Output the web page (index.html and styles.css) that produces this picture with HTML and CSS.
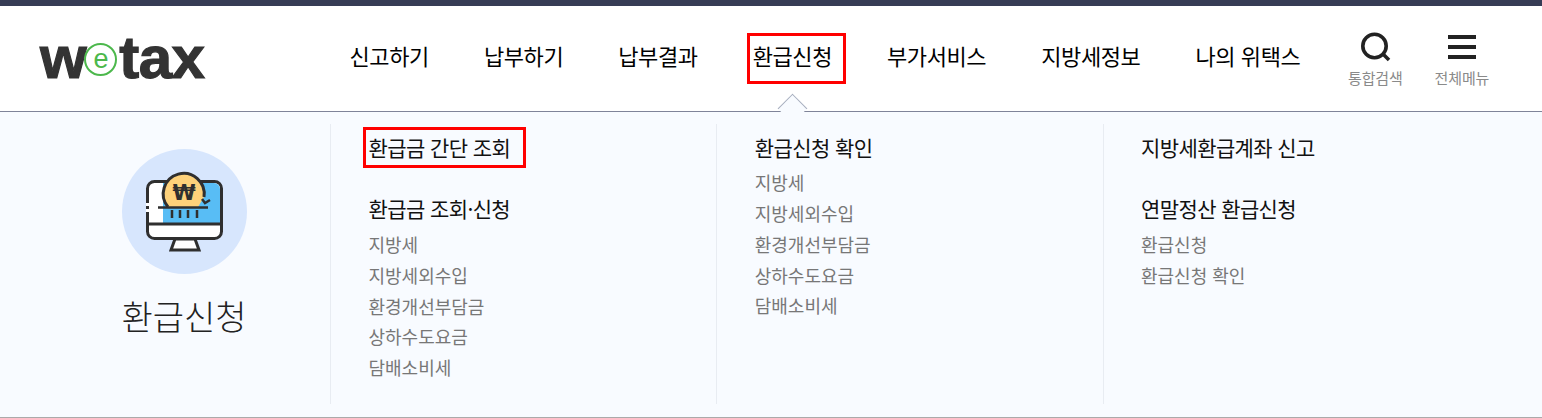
FILE: index.html
```html
<!DOCTYPE html>
<html lang="ko">

<head>
  <meta charset="UTF-8">
  <title>wetax</title>
  <link rel="stylesheet" href="styles.css">
</head>

<body>
  <header class="header">
    <div class="logo">w<span class="logo-e">e</span>tax</div>
    <nav class="gnb">
      <a>신고하기</a>
      <a>납부하기</a>
      <a>납부결과</a>
      <a class="current">환급신청</a>
      <a>부가서비스</a>
      <a>지방세정보</a>
      <a>나의 위택스</a>
    </nav>
    <div class="tools">
      <div class="tool">
        <svg width="32" height="30" viewBox="0 0 32 30"><circle cx="15.500" cy="14" r="11.700" fill="none" stroke="#222" stroke-width="3.600"/><path d="M24 22l6 6" stroke="#222" stroke-width="3.600"/></svg>
        <span>통합검색</span>
      </div>
      <div class="tool">
        <svg width="32" height="30" viewBox="0 0 32 30"><path d="M2 5h28M2 15h28M2 25h28" stroke="#222" stroke-width="4"/></svg>
        <span>전체메뉴</span>
      </div>
    </div>
  </header>
  <section class="panel">
    <div class="intro">
      <div class="intro-icon">
        <svg width="125" height="125" viewBox="0 0 125 125">
          <path d="M53 90h20l4 11H49z" fill="#fff" stroke="#2f2f2f" stroke-width="3"/>
          <rect x="25.500" y="32.500" width="74" height="57" rx="7" fill="#fff" stroke="#2f2f2f" stroke-width="3"/>
          <path d="M41 34h51a6 6 0 0 1 6 6v35H41z" fill="#58bdf5"/>
          <path d="M25 75h75" stroke="#2f2f2f" stroke-width="3"/>
          <path d="M46 58A20.500 20.500 0 1 1 82 48L76 58z" fill="#fdd17a"/>
          <path d="M46 58A20.500 20.500 0 1 1 82 48" fill="none" stroke="#2f2f2f" stroke-width="3"/>
          <path d="M80 50l3 4 5-3" fill="none" stroke="#2f2f2f" stroke-width="2.500"/>
          <path d="M24 54h3v3h-3zM24 60h3v3h-3z" fill="#fff"/>
          <text x="62" y="51" class="won">₩</text>
          <path d="M36 58.500h50M50 61v8M58 61v8M66 61v8M75 61v8" stroke="#2f2f2f" stroke-width="2.500"/>
        </svg>
      </div>
      <h2>환급신청</h2>
    </div>
    <div class="col">
      <a class="title marked">환급금 간단 조회</a>
      <a class="title">환급금 조회·신청</a>
      <a>지방세</a>
      <a>지방세외수입</a>
      <a>환경개선부담금</a>
      <a>상하수도요금</a>
      <a>담배소비세</a>
    </div>
    <div class="col">
      <a class="title">환급신청 확인</a>
      <a>지방세</a>
      <a>지방세외수입</a>
      <a>환경개선부담금</a>
      <a>상하수도요금</a>
      <a>담배소비세</a>
    </div>
    <div class="col">
      <a class="title">지방세환급계좌 신고</a>
      <a class="title">연말정산 환급신청</a>
      <a>환급신청</a>
      <a>환급신청 확인</a>
    </div>
  </section>
</body>

</html>
```
FILE: styles.css
```css
body {
  margin: 0;
  font-family: "Noto Sans CJK KR", "Noto Sans", sans-serif;
  background-color: #fff;
}

.header {
  display: flex;
  align-items: center;
  height: 105px;
  border-top: 6px solid #363c55;
  border-bottom: 1px solid #7f8499;
}

.logo {
  display: flex;
  align-items: center;
  width: 349.500px;
  margin-top: -2px;
  padding-left: 40px;
  box-sizing: border-box;
  font-family: "Liberation Sans", sans-serif;
  font-size: 60px;
  font-weight: bold;
  letter-spacing: -0.5px;
  color: #333;
  -webkit-text-stroke: 1.200px #333;
}

.logo-e {
  display: flex;
  align-items: center;
  justify-content: center;
  width: 33px;
  height: 33px;
  margin: 4px 2px 0 -2px;
  box-sizing: border-box;
  border: 2px solid #4cb84c;
  border-radius: 50%;
  font-size: 27px;
  font-weight: 400;
  color: #4cb84c;
  -webkit-text-stroke: 0;
  line-height: 1;
}

.gnb {
  display: flex;
  gap: 55px;
  width: 998.500px;
  margin-top: -8px;
  font-size: 22px;
  letter-spacing: -0.4px;
  color: #000;
}

.gnb a {
  position: relative;
}

/* red box and caret sit over the menu */
.gnb a.current::before {
  content: "";
  position: absolute;
  left: -6px;
  top: -6px;
  width: 93px;
  height: 45px;
  border: 3px solid #f00;
}

.gnb a.current::after {
  content: "";
  position: absolute;
  left: 29px;
  top: 59px;
  width: 21px;
  height: 21px;
  box-sizing: border-box;
  background-color: #f8fbff;
  border-top: 1px solid #a6adbd;
  border-left: 1px solid #a6adbd;
  transform: rotate(45deg);
}

.tools {
  display: flex;
  gap: 32px;
  margin-top: 2px;
}

.tool {
  display: flex;
  flex-direction: column;
  align-items: center;
  gap: 5px;
  font-size: 15px;
  letter-spacing: -0.15px;
  color: #8a8a8a;
}

.panel {
  display: flex;
  height: 306px;
  padding-top: 12px;
  box-sizing: border-box;
  background-color: #f8fbff;
  border-bottom: 1px solid #aaa;
}

.intro {
  width: 330px;
  display: flex;
  flex-direction: column;
  align-items: center;
  box-sizing: border-box;
  padding-left: 38px;
}

.intro-icon {
  width: 125px;
  height: 125px;
  margin-top: 25px;
  border-radius: 50%;
  background-color: #d7e6fd;
}

.won {
  font-family: "DejaVu Sans", sans-serif;
  font-size: 21px;
  font-weight: bold;
  text-anchor: middle;
  fill: #2f2f2f;
}

.intro h2 {
  margin: 17px 0 0;
  font-size: 34px;
  font-weight: 300;
  color: #222;
}

.col {
  width: 386.250px;
  height: 280px;
  padding: 7.500px 0 0 37.500px;
  box-sizing: border-box;
  border-left: 1px solid #e8ecf2;
  display: flex;
  flex-direction: column;
  align-items: flex-start;
}

.col a {
  font-size: 18px;
  line-height: 30.750px;
  color: #777;
}

.col a.title {
  position: relative;
  margin-bottom: 5px;
  font-size: 21px;
  letter-spacing: -0.6px;
  color: #111;
}

.col a.title + a.title {
  margin-top: 26px;
}

.col a.marked::after {
  content: "";
  position: absolute;
  left: -6px;
  top: -5px;
  width: 157px;
  height: 35px;
  border: 3px solid #f00;
}
```
